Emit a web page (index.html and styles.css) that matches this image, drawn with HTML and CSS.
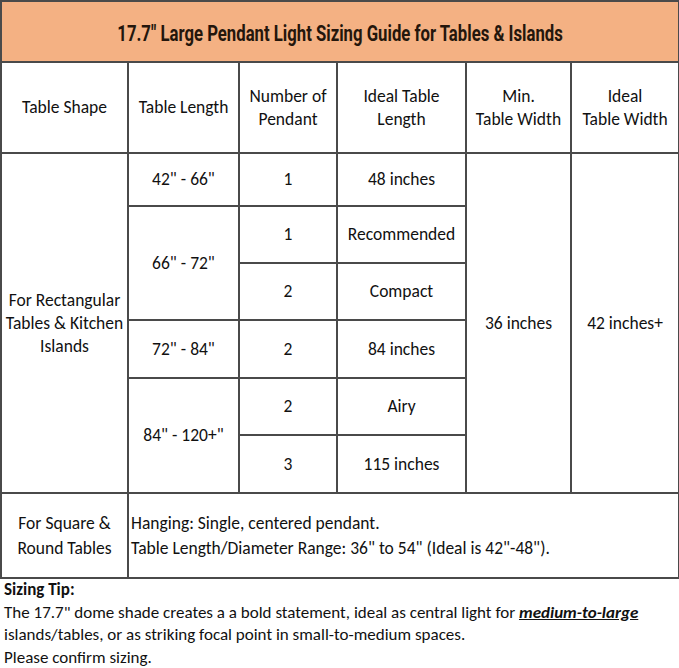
FILE: index.html
```html
<!DOCTYPE html>
<html>
<head>
<meta charset="utf-8">
<link rel="stylesheet" href="styles.css">
</head>
<body>
<table class="guide">
  <colgroup>
    <col class="c1"><col class="c2"><col class="c3"><col class="c4"><col class="c5"><col class="c6">
  </colgroup>
  <tr class="r-title">
    <th colspan="6" class="title"><span class="title-text">17.7" Large Pendant Light Sizing Guide for Tables &amp; Islands</span></th>
  </tr>
  <tr class="r-head">
    <td>Table Shape</td>
    <td>Table Length</td>
    <td>Number of<br>Pendant</td>
    <td>Ideal Table<br>Length</td>
    <td>Min.<br>Table Width</td>
    <td>Ideal<br>Table Width</td>
  </tr>
  <tr class="r1">
    <td rowspan="7" class="shape">For Rectangular<br>Tables &amp; Kitchen<br>Islands</td>
    <td>42" - 66"</td>
    <td>1</td>
    <td>48 inches</td>
    <td rowspan="7">36 inches</td>
    <td rowspan="7">42 inches+</td>
  </tr>
  <tr class="r2">
    <td rowspan="2">66" - 72"</td>
    <td>1</td>
    <td>Recommended</td>
  </tr>
  <tr class="r3">
    <td>2</td>
    <td>Compact</td>
  </tr>
  <tr class="r4">
    <td>72" - 84"</td>
    <td>2</td>
    <td>84 inches</td>
  </tr>
  <tr class="r5">
    <td rowspan="2">84" - 120+"</td>
    <td>2</td>
    <td>Airy</td>
  </tr>
  <tr class="r6">
    <td>3</td>
    <td>115 inches</td>
  </tr>
  <tr class="r7"></tr>
  <tr class="r-square">
    <td>For Square &amp;<br>Round Tables</td>
    <td colspan="5" class="left">Hanging: Single, centered pendant.<br>Table Length/Diameter Range: 36" to 54" (Ideal is 42"-48").</td>
  </tr>
</table>
<div class="tip">
  <div class="tip-head">Sizing Tip:</div>
  <div class="nowrap">The 17.7" dome shade creates a a bold statement, ideal as central light for <span class="em">medium-to-large </span></div>
  <div>islands/tables, or as striking focal point in small-to-medium spaces.</div>
  <div>Please confirm sizing.</div>
</div>
</body>
</html>
```

FILE: styles.css
```css
html, body {
  margin: 0;
  padding: 0;
  background: #ffffff;
}
body {
  font-family: Carlito, Lato, "Open Sans", sans-serif;
  color: #111111;
}
.guide {
  border-collapse: collapse;
  table-layout: fixed;
  width: 678px;
  margin: 0;
}
.c1 { width: 127px; }
.c2 { width: 111px; }
.c3 { width: 98px; }
.c4 { width: 129px; }
.c5 { width: 105px; }
.c6 { width: 108px; }
.guide td, .guide th {
  border: 2px solid #4a4a4a;
  padding: 0 2px;
  text-align: center;
  vertical-align: middle;
  font-size: 17.5px;
  line-height: 23px;
  font-weight: normal;
}
.title {
  background: #f4b183;
  height: 59px;
  color: #24160c;
  white-space: nowrap;
}
.title-text {
  display: inline-block;
  font-family: Roboto, sans-serif;
  font-weight: 700;
  font-size: 22px;
  line-height: 26px;
  transform: scaleX(0.76);
  transform-origin: center;
  margin: 0 -200px;
  padding-top: 4px;
}
.r-head td { height: 89px; }
.r1 td { height: 51px; }
.r2 td, .r3 td, .r4 td, .r5 td, .r6 td { height: 55px; }
.r4 td, .r6 td { height: 56px; }
.r7 { height: 0; }
.r-square td { height: 83px; line-height: 25px; }
.guide td.left { text-align: left; }
.tip {
  font-size: 17px;
  line-height: 22.7px;
  padding: 0 4px;
}
.nowrap { white-space: nowrap; }
.tip-head { font-weight: bold; }
.em {
  font-weight: bold;
  font-style: italic;
  text-decoration: underline;
}
```
